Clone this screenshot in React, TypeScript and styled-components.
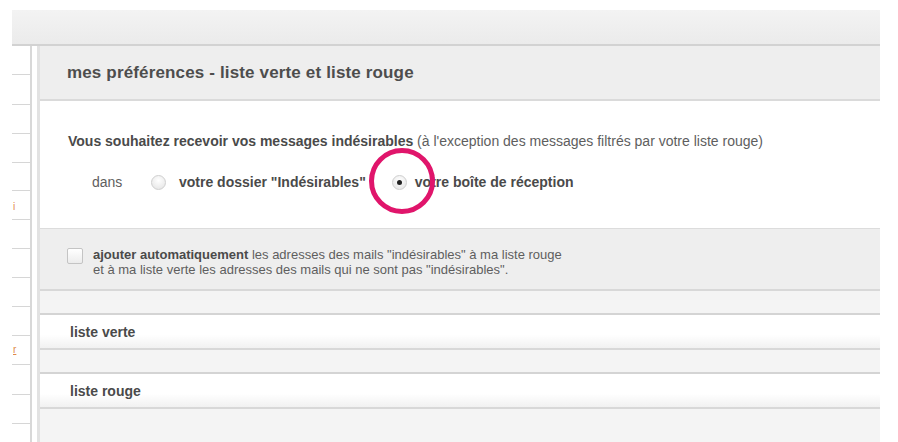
import React from 'react';
import styled, { createGlobalStyle } from 'styled-components';

const GlobalStyle = createGlobalStyle`
    html, body {
        margin: 0;
        padding: 0;
        background: #ffffff;
        font-family: "Liberation Sans", Arial, sans-serif;
        color: #555555;
    }
`

const sideLines = [74, 104, 133, 162, 190, 219, 248, 277, 306, 335, 364, 394, 423]

const App: React.FC = () => {
    return (
        <>
            <GlobalStyle />
            <Page>
                <TopBar />
                <Body>
                    <Sidebar>
                        {sideLines.map((y, i) => (
                            <SideLine key={i} style={{ top: y - 46 }} />
                        ))}
                        <SideMark style={{ top: 201 - 46 }}>i</SideMark>
                        <SideMark style={{ top: 344 - 46 }} $underline>r</SideMark>
                    </Sidebar>
                    <Divider />
                    <Panel>
                        <Header>mes préférences - liste verte et liste rouge</Header>
                        <Section>
                            <Question>
                                <b>Vous souhaitez recevoir vos messages indésirables</b> (à l'exception des messages filtrés par votre liste rouge)
                            </Question>
                            <RadioRow>
                                <Dans>dans</Dans>
                                <Choice $after={26}>
                                    <Radio $gap={13} />
                                    <ChoiceLabel>votre dossier "Indésirables"</ChoiceLabel>
                                </Choice>
                                <Choice>
                                    <Radio $checked $gap={8} />
                                    <ChoiceLabel>votre boîte de réception</ChoiceLabel>
                                    <Highlight />
                                </Choice>
                            </RadioRow>
                        </Section>
                        <Options>
                            <CheckBox />
                            <OptionText>
                                <b>ajouter automatiquement</b> les adresses des mails "indésirables" à ma liste rouge<br />
                                et à ma liste verte les adresses des mails qui ne sont pas "indésirables".
                            </OptionText>
                        </Options>
                        <Spacer $h={22} />
                        <ListRow>liste verte</ListRow>
                        <Spacer $h={22} />
                        <ListRow>liste rouge</ListRow>
                        <Spacer $h={40} />
                    </Panel>
                </Body>
            </Page>
        </>
    )
}
export default App

const Page = styled.div`
    width: 868px;
    padding: 10px 0 0 12px;
    height: 432px;
    overflow: hidden;
`
const TopBar = styled.div`
    height: 34px;
    background: linear-gradient(#f3f3f3, #ebebeb);
    border-bottom: 2px solid #d2d2d2;
`
const Body = styled.div`
    display: flex;
    align-items: stretch;
`
const Sidebar = styled.div`
    position: relative;
    width: 18px;
    height: 400px;
`
const SideLine = styled.div`
    position: absolute;
    left: 0;
    width: 18px;
    height: 1px;
    background: #d6d6d6;
`
const SideMark = styled.span<{ $underline?: boolean }>`
    position: absolute;
    left: 1px;
    font-size: 10px;
    color: #e08a4a;
    text-decoration: ${p => (p.$underline ? 'underline' : 'none')};
`
const Divider = styled.div`
    width: 5px;
    border-left: 2px solid #d8d8d8;
    border-right: 3px solid #e2e2e2;
    background: #ffffff;
`
const Panel = styled.div`
    flex: 1;
    display: flex;
    flex-direction: column;
`
const Header = styled.div`
    height: 53px;
    background: #eeeeee;
    border-bottom: 2px solid #dadada;
    padding-left: 27px;
    display: flex;
    align-items: center;
    font-size: 17px;
    letter-spacing: 0.15px;
    font-weight: 700;
    color: #4d4d4d;
`
const Section = styled.div`
    height: 127px;
    padding: 32px 0 0 28px;
    box-sizing: border-box;
    background: #ffffff;
`
const Question = styled.div`
    font-size: 14px;
    line-height: 16px;
    color: #5e5e5e;
    b {
        color: #4a4a4a;
    }
`
const RadioRow = styled.div`
    display: flex;
    align-items: center;
    margin-top: 25px;
    padding-left: 24px;
    font-size: 14px;
    line-height: 16px;
`
const Dans = styled.span`
    color: #5e5e5e;
    width: 59px;
`
const Choice = styled.label<{ $after?: number }>`
    position: relative;
    display: flex;
    align-items: center;
    margin-right: ${p => p.$after ?? 0}px;
`
const Radio = styled.span<{ $checked?: boolean; $gap: number }>`
    width: 13px;
    height: 13px;
    border-radius: 50%;
    border: 1px solid #cfcfcf;
    background: radial-gradient(circle at 50% 35%, #ffffff, #e2e2e2);
    margin-right: ${p => p.$gap}px;
    display: flex;
    align-items: center;
    justify-content: center;
    &::after {
        content: '';
        width: 5px;
        height: 5px;
        border-radius: 50%;
        background: #222222;
        display: ${p => (p.$checked ? 'block' : 'none')};
    }
`
const ChoiceLabel = styled.span`
    font-weight: 700;
    color: #4a4a4a;
`
const Highlight = styled.span`
    position: absolute;
    left: -23px;
    top: -26px;
    width: 66px;
    height: 66px;
    box-sizing: border-box;
    border-radius: 50%;
    border: 5px solid #e0156b;
    pointer-events: none;
`
const Options = styled.div`
    height: 61px;
    box-sizing: border-box;
    border-top: 1px solid #dcdcdc;
    background: #eeeeee;
    display: flex;
    align-items: flex-start;
    padding: 18px 0 0 27px;
`
const CheckBox = styled.span`
    width: 14px;
    height: 14px;
    border: 1px solid #c4c4c4;
    border-radius: 2px;
    background: linear-gradient(#ffffff, #ececec);
    margin: 1px 10px 0 0;
    flex-shrink: 0;
`
const OptionText = styled.div`
    font-size: 13px;
    line-height: 15px;
    color: #5e5e5e;
    b {
        color: #4a4a4a;
    }
`
const Spacer = styled.div<{ $h: number }>`
    height: ${p => p.$h}px;
    background: #f4f4f4;
    border-top: 2px solid #d8d8d8;
    box-sizing: content-box;
`
const ListRow = styled.div`
    height: 33px;
    border-top: 2px solid #d4d4d4;
    background: linear-gradient(#ffffff 60%, #f1f1f1);
    padding-left: 30px;
    display: flex;
    align-items: center;
    font-size: 14px;
    font-weight: 700;
    color: #4a4a4a;
`
